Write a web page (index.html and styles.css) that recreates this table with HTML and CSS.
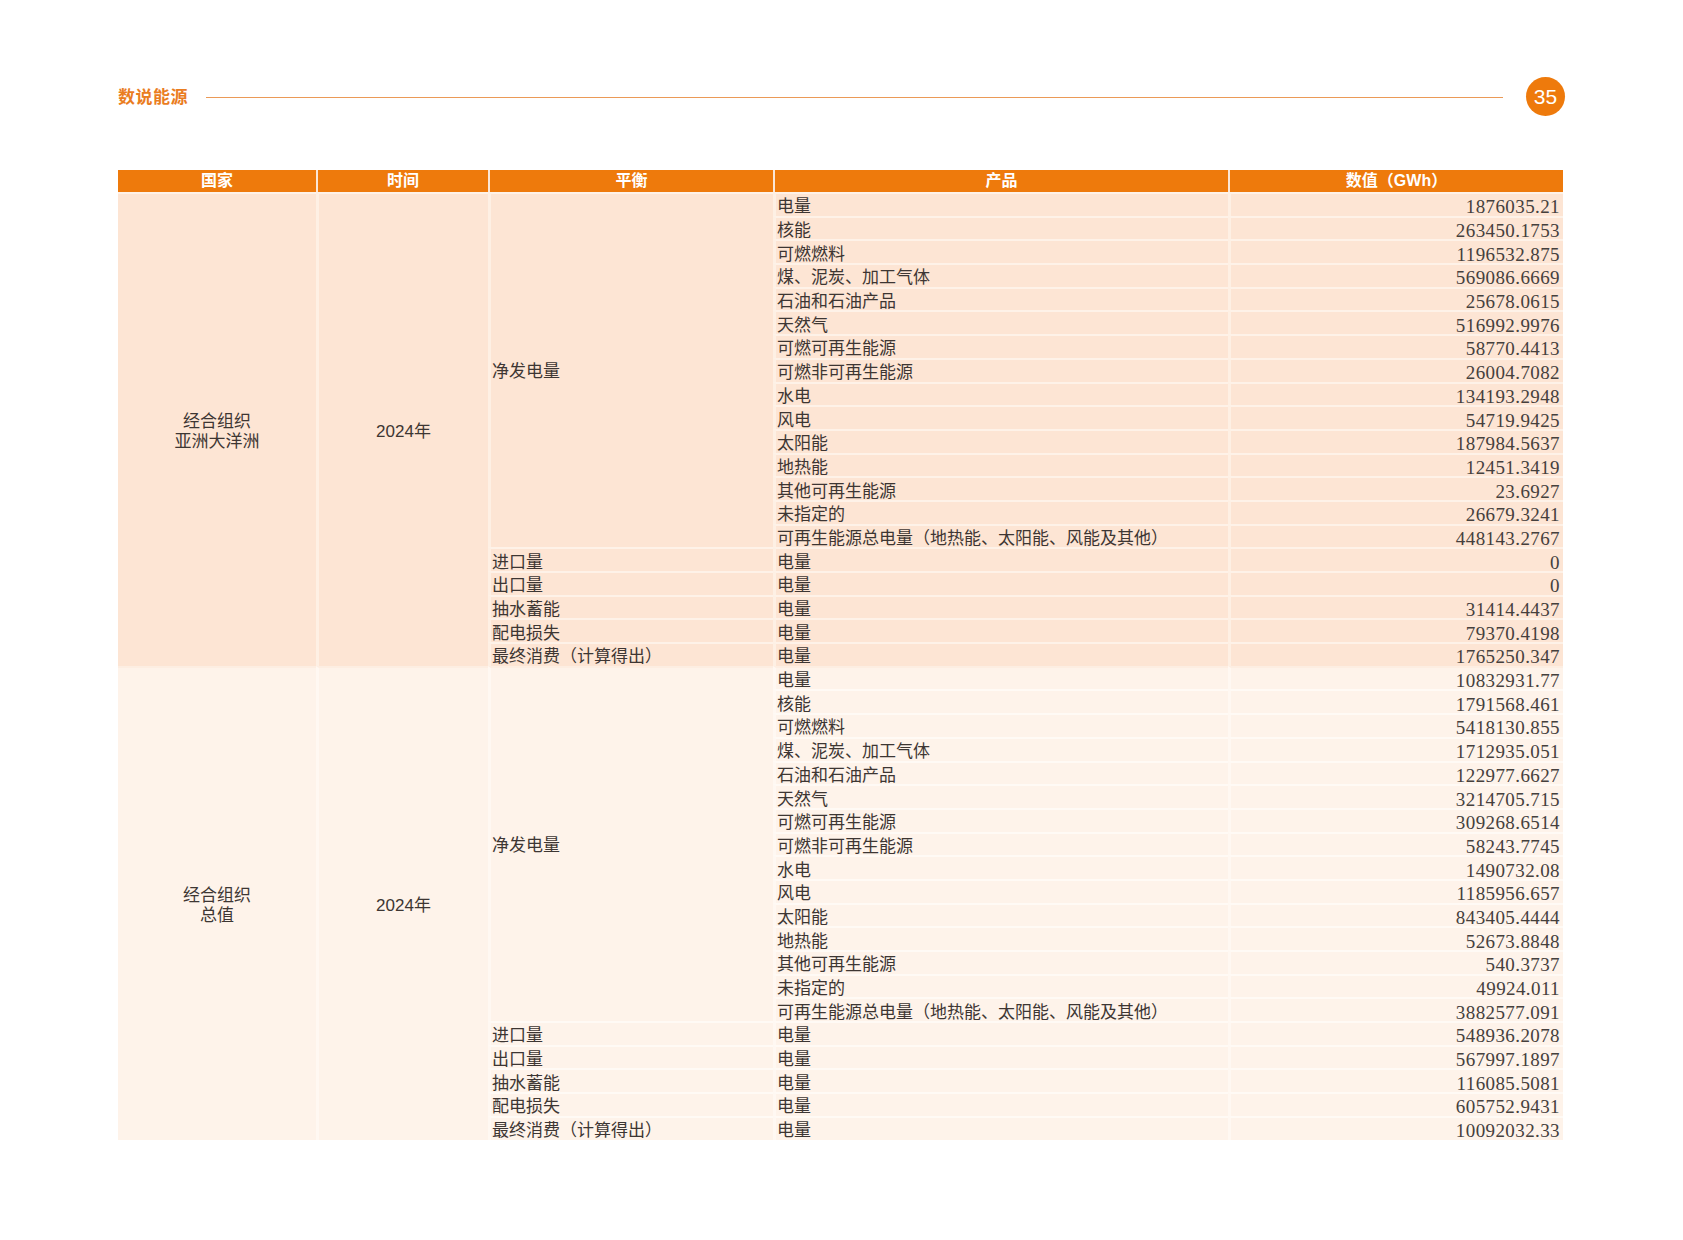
FILE: index.html
```html
<!DOCTYPE html>
<html lang="zh-CN">
<head>
<meta charset="utf-8">
<title>数说能源 35</title>
<link rel="stylesheet" href="styles.css">
</head>
<body>
<div class="page">
  <header class="top">
    <span class="section">数说能源</span>
    <span class="rule"></span>
    <span class="pageno">35</span>
  </header>
  <table class="data">
    <colgroup>
      <col class="c1"><col class="c2"><col class="c3"><col class="c4"><col class="c5">
    </colgroup>
    <thead>
      <tr><th>国家</th><th>时间</th><th>平衡</th><th>产品</th><th>数值（GWh）</th></tr>
    </thead>
    <tbody class="b1">
      <tr><td rowspan="20" class="ctr">经合组织<br>亚洲大洋洲</td><td rowspan="20" class="ctr">2024年</td><td rowspan="15" class="bal">净发电量</td><td>电量</td><td class="num">1876035.21</td></tr>
      <tr><td>核能</td><td class="num">263450.1753</td></tr>
      <tr><td>可燃燃料</td><td class="num">1196532.875</td></tr>
      <tr><td>煤、泥炭、加工气体</td><td class="num">569086.6669</td></tr>
      <tr><td>石油和石油产品</td><td class="num">25678.0615</td></tr>
      <tr><td>天然气</td><td class="num">516992.9976</td></tr>
      <tr><td>可燃可再生能源</td><td class="num">58770.4413</td></tr>
      <tr><td>可燃非可再生能源</td><td class="num">26004.7082</td></tr>
      <tr><td>水电</td><td class="num">134193.2948</td></tr>
      <tr><td>风电</td><td class="num">54719.9425</td></tr>
      <tr><td>太阳能</td><td class="num">187984.5637</td></tr>
      <tr><td>地热能</td><td class="num">12451.3419</td></tr>
      <tr><td>其他可再生能源</td><td class="num">23.6927</td></tr>
      <tr><td>未指定的</td><td class="num">26679.3241</td></tr>
      <tr><td>可再生能源总电量（地热能、太阳能、风能及其他）</td><td class="num">448143.2767</td></tr>
      <tr><td>进口量</td><td>电量</td><td class="num">0</td></tr>
      <tr><td>出口量</td><td>电量</td><td class="num">0</td></tr>
      <tr><td>抽水蓄能</td><td>电量</td><td class="num">31414.4437</td></tr>
      <tr><td>配电损失</td><td>电量</td><td class="num">79370.4198</td></tr>
      <tr><td>最终消费（计算得出）</td><td>电量</td><td class="num">1765250.347</td></tr>
    </tbody>
    <tbody class="b2">
      <tr><td rowspan="20" class="ctr">经合组织<br>总值</td><td rowspan="20" class="ctr">2024年</td><td rowspan="15" class="bal">净发电量</td><td>电量</td><td class="num">10832931.77</td></tr>
      <tr><td>核能</td><td class="num">1791568.461</td></tr>
      <tr><td>可燃燃料</td><td class="num">5418130.855</td></tr>
      <tr><td>煤、泥炭、加工气体</td><td class="num">1712935.051</td></tr>
      <tr><td>石油和石油产品</td><td class="num">122977.6627</td></tr>
      <tr><td>天然气</td><td class="num">3214705.715</td></tr>
      <tr><td>可燃可再生能源</td><td class="num">309268.6514</td></tr>
      <tr><td>可燃非可再生能源</td><td class="num">58243.7745</td></tr>
      <tr><td>水电</td><td class="num">1490732.08</td></tr>
      <tr><td>风电</td><td class="num">1185956.657</td></tr>
      <tr><td>太阳能</td><td class="num">843405.4444</td></tr>
      <tr><td>地热能</td><td class="num">52673.8848</td></tr>
      <tr><td>其他可再生能源</td><td class="num">540.3737</td></tr>
      <tr><td>未指定的</td><td class="num">49924.011</td></tr>
      <tr><td>可再生能源总电量（地热能、太阳能、风能及其他）</td><td class="num">3882577.091</td></tr>
      <tr><td>进口量</td><td>电量</td><td class="num">548936.2078</td></tr>
      <tr><td>出口量</td><td>电量</td><td class="num">567997.1897</td></tr>
      <tr><td>抽水蓄能</td><td>电量</td><td class="num">116085.5081</td></tr>
      <tr><td>配电损失</td><td>电量</td><td class="num">605752.9431</td></tr>
      <tr><td>最终消费（计算得出）</td><td>电量</td><td class="num">10092032.33</td></tr>
    </tbody>
  </table>
</div>
</body>
</html>
```
FILE: styles.css
```css
html, body {
  margin: 0;
  padding: 0;
  background: #ffffff;
}
.page {
  width: 1683px;
  box-sizing: border-box;
  padding: 76px 118px 0 118px;
  font-family: "Liberation Serif", "Noto Sans CJK SC", serif;
  color: #3a3330;
}
.top {
  display: flex;
  align-items: center;
  height: 40px;
  margin-bottom: 54px;
}
.section {
  font-family: "Noto Sans CJK SC", sans-serif;
  font-weight: 700;
  font-size: 17px;
  color: #ea7d1f;
  letter-spacing: 0.5px;
  line-height: 20px;
}
.rule {
  flex: 1;
  height: 0;
  border-top: 1.5px solid #eb9a57;
  margin: 2px 23px 0 18px;
}
.pageno {
  width: 39px;
  height: 39px;
  border-radius: 50%;
  background: #ee7a0c;
  color: #ffffff;
  font-family: "Liberation Sans", sans-serif;
  font-size: 21px;
  line-height: 39px;
  text-align: center;
}
.data {
  width: 1445px;
  table-layout: fixed;
  border-collapse: separate;
  border-spacing: 0;
}
.c1 { width: 198px; }
.c2 { width: 172px; }
.c3 { width: 285px; }
.c4 { width: 455px; }
.c5 { width: 335px; }
.data th {
  background: #ee7a0c;
  color: #ffffff;
  font-family: "Liberation Sans", "Noto Sans CJK SC", sans-serif;
  font-weight: 700;
  font-size: 16px;
  height: 22px;
  padding: 0;
  line-height: 20px;
  text-align: center;
  border-left: 2px solid #fbe6d6;
}
.data th:first-child { border-left: 0; }
.data td {
  height: 23.7px;
  box-sizing: border-box;
  padding: 4px 3px 0 1px;
  font-size: 17px;
  line-height: 17px;
  vertical-align: middle;
  white-space: nowrap;
  border-top: 2px solid #fef2e8;
  border-left: 3px solid #fef0e4;
  color: #3d3633;
}
.data tr > td.ctr:first-child { border-left: 0; }
.b1 td { background: #fde5d4; }
.b2 td { background: #fef3ea; border-top-color: #fffaf5; border-left-color: #fff8f2; }
.b2 tr:first-child td { border-top-color: #fdeee2; }
.data td.ctr {
  text-align: center;
  font-family: "Liberation Sans", "Noto Sans CJK SC", sans-serif;
  font-size: 17px;
  line-height: 20px;
  padding: 4px 0 0 0;
}
.data td.bal {
  padding-top: 2px;
}
.data td.num {
  text-align: right;
  font-size: 19px;
  letter-spacing: 0.4px;
  padding-right: 3px;
  color: #45403d;
}
```
